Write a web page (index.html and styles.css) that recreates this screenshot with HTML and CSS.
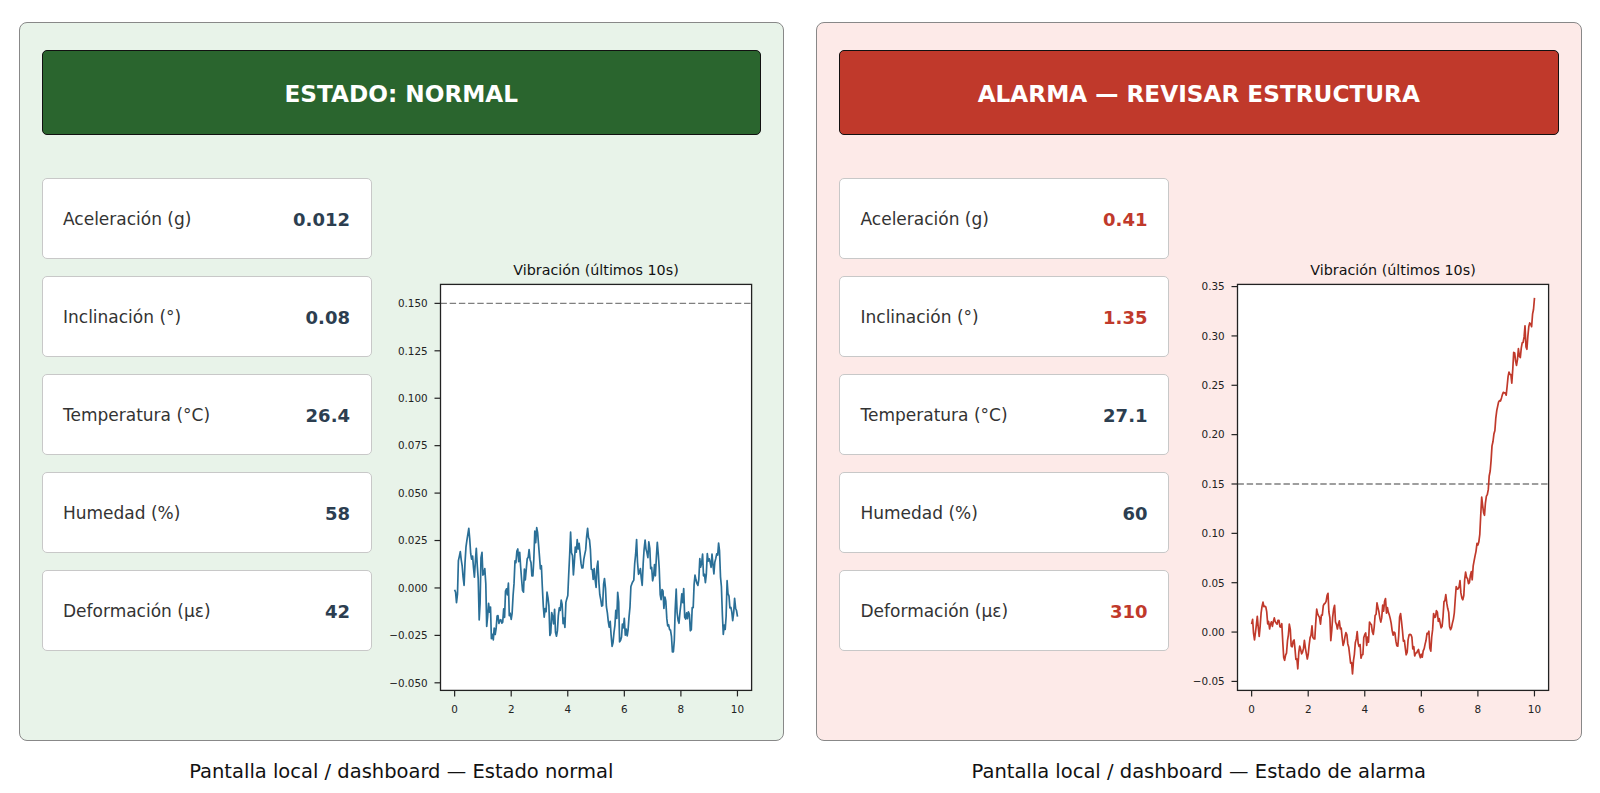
FILE: index.html
```html
<!DOCTYPE html>
<html>
<head>
<meta charset="utf-8">
<title>Pantalla local / dashboard</title>
<link rel="stylesheet" href="styles.css">
</head>
<body>

<div class="page">

  <div class="screen">
    <div class="panel normal">
      <header class="banner">ESTADO: NORMAL</header>
      <div class="body">
        <div class="metrics">
          <div class="metric"><span class="label">Aceleración (g)</span><span class="value">0.012</span></div>
          <div class="metric"><span class="label">Inclinación (°)</span><span class="value">0.08</span></div>
          <div class="metric"><span class="label">Temperatura (°C)</span><span class="value">26.4</span></div>
          <div class="metric"><span class="label">Humedad (%)</span><span class="value">58</span></div>
          <div class="metric"><span class="label">Deformación (με)</span><span class="value">42</span></div>
        </div>
        <svg class="chart" id="chart-normal" viewBox="0 0 388.5 545"></svg>
      </div>
    </div>
    <p class="caption">Pantalla local / dashboard — Estado normal</p>
  </div>

  <div class="screen">
    <div class="panel alarm">
      <header class="banner">ALARMA — REVISAR ESTRUCTURA</header>
      <div class="body">
        <div class="metrics">
          <div class="metric"><span class="label">Aceleración (g)</span><span class="value high">0.41</span></div>
          <div class="metric"><span class="label">Inclinación (°)</span><span class="value high">1.35</span></div>
          <div class="metric"><span class="label">Temperatura (°C)</span><span class="value">27.1</span></div>
          <div class="metric"><span class="label">Humedad (%)</span><span class="value">60</span></div>
          <div class="metric"><span class="label">Deformación (με)</span><span class="value high">310</span></div>
        </div>
        <svg class="chart" id="chart-alarm" viewBox="0 0 388.5 545"></svg>
      </div>
    </div>
    <p class="caption">Pantalla local / dashboard — Estado de alarma</p>
  </div>

</div>

<script src="chart.js"></script>
</body>
</html>
```

FILE: styles.css
```css
body {
    margin: 0;
    background: #fff;
    font-family: "DejaVu Sans", sans-serif;
}

.page {
    display: flex;
    gap: 32px;
    padding: 21.7px 18.5px 0;
}

.screen {
    width: 765.5px;
}

.panel {
    box-sizing: border-box;
    height: 719px;
    border: 1.5px solid #888;
    border-radius: 8px;
    padding: 27.5px 22px 0;
}

.panel.normal {
    background: #e8f3e9;
}

.panel.alarm {
    background: #fdeae8;
}

.banner {
    box-sizing: border-box;
    height: 85.3px;
    border: 1.3px solid #111;
    border-radius: 5px;
    padding-top: 2px;
    display: flex;
    align-items: center;
    justify-content: center;
    color: #fff;
    font-weight: bold;
    font-size: 23.2px;
}

.normal .banner {
    background: #2a652e;
}

.alarm .banner {
    background: #c0392b;
}

.body {
    display: flex;
    margin-top: 42.3px;
}

.metrics {
    width: 330px;
    flex: none;
    display: flex;
    flex-direction: column;
    gap: 17px;
}

.metric {
    box-sizing: border-box;
    height: 81px;
    background: #fff;
    border: 1.6px solid #c8c8c8;
    border-radius: 5px;
    display: flex;
    align-items: center;
    justify-content: space-between;
    padding: 2px 20.5px 0 20.5px;
}

.label {
    font-size: 17px;
    color: #333;
}

.value {
    font-size: 18px;
    font-weight: bold;
    color: #2c3e50;
}

.value.high {
    color: #c0392b;
}

.chart {
    display: block;
    width: 388.5px;
    height: 545px;
}

.chart text {
    font-family: "DejaVu Sans", sans-serif;
    font-size: 10.4px;
    fill: #222;
}

.chart .chart-title {
    font-size: 14.3px;
    fill: #111;
    text-anchor: middle;
}

.chart .ylab {
    text-anchor: end;
}

.chart .xlab {
    text-anchor: middle;
}

.plot-bg {
    fill: #fff;
}

.frame {
    fill: none;
    stroke: #222;
    stroke-width: 1.3;
}

.tick {
    stroke: #222;
    stroke-width: 1.2;
}

.threshold {
    stroke: #7f7f7f;
    stroke-width: 1.3;
    stroke-dasharray: 6.4 2.8;
}

.trace {
    fill: none;
    stroke-width: 1.7;
    stroke-linejoin: round;
}

.caption {
    margin: 19.2px 0 0;
    text-align: center;
    font-size: 19.5px;
    line-height: 24px;
    color: #111;
}
```

FILE: chart.js
```js
var NS = "http://www.w3.org/2000/svg";

// plot box inside each chart svg
var L = 68.5, R = 379.6, T = 106.4, B = 512.4;

function el(parent, tag, attrs, text) {
    var node = document.createElementNS(NS, tag);
    for (var k in attrs) node.setAttribute(k, attrs[k]);
    if (text) node.textContent = text;
    parent.appendChild(node);
    return node;
}

function seeded(seed) {
    return function () {
        seed = (seed * 16807) % 2147483647;
        return (seed - 1) / 2147483646;
    };
}

function interp(pts, t) {
    for (var i = 1; i < pts.length; i++) {
        if (t <= pts[i][0]) {
            var a = pts[i - 1], b = pts[i];
            return a[1] + (b[1] - a[1]) * (t - a[0]) / (b[0] - a[0]);
        }
    }
    return pts[pts.length - 1][1];
}

function drawChart(id, cfg) {
    var svg = document.getElementById(id);
    function sx(t) { return L + (t + 0.5) / 11 * (R - L); }
    function sy(v) { return T + (cfg.ymax - v) / (cfg.ymax - cfg.ymin) * (B - T); }

    el(svg, "text", { x: (L + R) / 2, y: 97.2, "class": "chart-title" }, "Vibración (últimos 10s)");
    el(svg, "rect", { x: L, y: T, width: R - L, height: B - T, "class": "plot-bg" });
    el(svg, "line", { x1: L, x2: R, y1: sy(0.15), y2: sy(0.15), "class": "threshold" });

    var rand = seeded(cfg.seed);
    var pts = [];
    for (var i = 0; i <= 300; i++) {
        var t = i / 30;
        var v = interp(cfg.shape, t) + (rand() - 0.5) * cfg.noise;
        pts.push(sx(t).toFixed(1) + "," + sy(v).toFixed(1));
    }
    el(svg, "polyline", { points: pts.join(" "), "class": "trace", stroke: cfg.color });

    el(svg, "rect", { x: L, y: T, width: R - L, height: B - T, "class": "frame" });

    cfg.yticks.forEach(function (v) {
        var y = sy(v);
        el(svg, "line", { x1: L - 6, x2: L, y1: y, y2: y, "class": "tick" });
        var txt = (v < 0 ? "\u2212" : "") + Math.abs(v).toFixed(cfg.decimals);
        el(svg, "text", { x: L - 12.8, y: y + 3.8, "class": "ylab" }, txt);
    });

    for (var x = 0; x <= 10; x += 2) {
        el(svg, "line", { x1: sx(x), x2: sx(x), y1: B, y2: B + 6, "class": "tick" });
        el(svg, "text", { x: sx(x), y: 535, "class": "xlab" }, String(x));
    }
}

drawChart("chart-normal", {
    ymin: -0.054, ymax: 0.160, decimals: 3, seed: 11, noise: 0.012, color: "#2a6f97",
    yticks: [0.150, 0.125, 0.100, 0.075, 0.050, 0.025, 0, -0.025, -0.050],
    shape: [
        [0, 0.005], [0.06, -0.007], [0.18, 0.021], [0.35, 0.003], [0.4, 0.026], [0.53, 0.028],
        [0.7, 0.005], [0.77, 0.025], [0.88, -0.016], [0.94, 0.019], [1.1, 0.002], [1.14, -0.019],
        [1.24, -0.01], [1.36, -0.032], [1.47, -0.017], [1.6, -0.023], [1.89, 0], [2.0, -0.022],
        [2.15, 0.014], [2.3, 0.015], [2.42, 0.002], [2.65, 0.022], [2.77, 0.005], [2.85, 0.030],
        [2.95, 0.022], [3.07, 0.007], [3.15, -0.014], [3.3, -0.006], [3.36, -0.021], [3.54, -0.015],
        [3.6, -0.030], [3.71, -0.005], [3.89, -0.021], [4.0, 0.002], [4.09, 0.031], [4.19, 0.008],
        [4.36, 0.025], [4.54, 0.01], [4.72, 0.034], [4.83, 0.01], [5.0, 0.005], [5.07, 0.016],
        [5.16, -0.012], [5.3, 0.001], [5.48, -0.02], [5.57, -0.032], [5.78, -0.004], [5.86, -0.032],
        [5.98, -0.013], [6.03, -0.031], [6.19, -0.011], [6.31, 0.005], [6.43, 0.020], [6.6, 0.001],
        [6.72, 0.021], [6.9, 0.019], [7.02, 0.003], [7.17, 0.02], [7.28, -0.002], [7.43, -0.007],
        [7.55, -0.02], [7.64, -0.017], [7.72, -0.044], [7.84, -0.003], [7.9, -0.022], [8.08, -0.002],
        [8.2, -0.019], [8.37, -0.016], [8.49, 0.006], [8.58, 0.002], [8.73, 0.019], [8.84, 0.001],
        [8.96, 0.017], [9.14, 0.011], [9.26, 0.015], [9.35, 0.031], [9.47, -0.018], [9.59, -0.021],
        [9.65, 0.006], [9.73, -0.015], [9.91, -0.011], [10, -0.017]
    ]
});

drawChart("chart-alarm", {
    ymin: -0.0591, ymax: 0.3522, decimals: 2, seed: 7, noise: 0.012, color: "#c0392b",
    yticks: [0.35, 0.30, 0.25, 0.20, 0.15, 0.10, 0.05, 0, -0.05],
    shape: [
        [0, 0.014], [0.12, -0.008], [0.2, 0.018], [0.26, -0.01], [0.35, 0.023], [0.45, 0.03],
        [0.55, 0.016], [0.65, 0.001], [0.74, 0.011], [0.88, 0.007], [1.06, 0.007], [1.15, -0.028],
        [1.26, -0.016], [1.33, 0.006], [1.42, -0.013], [1.5, -0.008], [1.62, -0.037], [1.69, -0.01],
        [1.77, -0.028], [1.86, -0.006], [1.97, -0.027], [2.12, 0.004], [2.22, -0.015], [2.3, 0.023],
        [2.42, 0.007], [2.56, 0.03], [2.71, 0.035], [2.81, -0.008], [2.89, 0.031], [3.0, 0.006],
        [3.12, 0.011], [3.24, -0.02], [3.36, 0.001], [3.45, -0.015], [3.57, -0.04], [3.71, -0.001],
        [3.89, -0.025], [4.0, -0.004], [4.12, -0.011], [4.18, 0.009], [4.3, 0.001], [4.42, 0.028],
        [4.54, 0.013], [4.72, 0.031], [4.87, 0.011], [5.01, -0.001], [5.19, -0.015], [5.25, 0.026],
        [5.34, -0.004], [5.48, -0.021], [5.6, -0.004], [5.78, -0.021], [5.9, -0.023], [6.07, -0.021],
        [6.25, 0.002], [6.33, -0.018], [6.43, 0.016], [6.57, 0.021], [6.72, -0.004], [6.84, 0.04],
        [6.96, 0.016], [7.04, 0.006], [7.14, 0.019], [7.26, 0.047], [7.37, 0.05], [7.47, 0.026],
        [7.55, 0.058], [7.71, 0.053], [7.82, 0.058], [7.9, 0.082], [8.02, 0.094], [8.08, 0.104],
        [8.14, 0.14], [8.2, 0.115], [8.3, 0.14], [8.37, 0.151], [8.47, 0.178], [8.53, 0.189],
        [8.64, 0.214], [8.73, 0.231], [8.9, 0.243], [9.0, 0.238], [9.08, 0.26], [9.2, 0.253],
        [9.26, 0.278], [9.38, 0.275], [9.43, 0.283], [9.49, 0.273], [9.61, 0.299], [9.67, 0.307],
        [9.73, 0.28], [9.79, 0.307], [9.85, 0.312], [9.9, 0.31], [10, 0.334]
    ]
});
```
